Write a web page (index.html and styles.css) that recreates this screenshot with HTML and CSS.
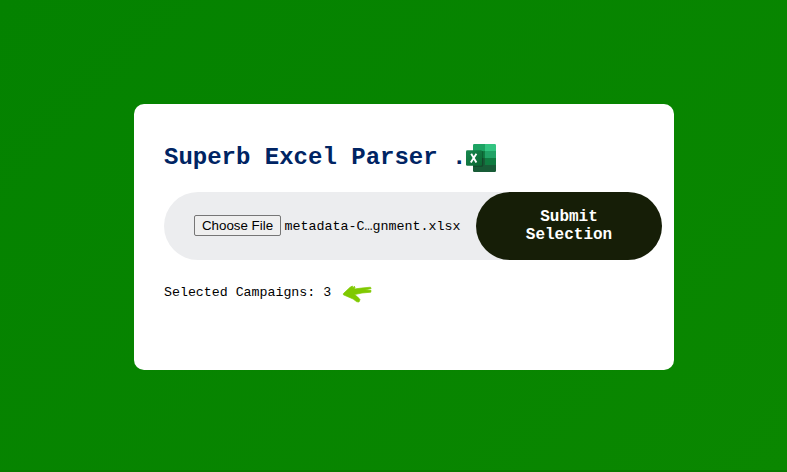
FILE: index.html
```html
<!DOCTYPE html>
<html lang="en">
<head>
<meta charset="utf-8">
<title>Superb Excel Parser</title>
<link rel="stylesheet" href="styles.css">
</head>
<body>
<main class="card">
  <h1 class="title"><span>Superb Excel Parser .</span><svg class="excel" viewBox="0 0 30 28" aria-hidden="true">
    <defs>
      <linearGradient id="tile" x1="0" y1="0" x2="1" y2="1"><stop offset="0" stop-color="#18884f"/><stop offset="1" stop-color="#0b6631"/></linearGradient>
      <clipPath id="sheet"><rect x="7" width="23" height="28" rx="1.3"/></clipPath>
    </defs>
    <g clip-path="url(#sheet)">
      <path fill="#1da363" d="M7 0h12v7H7z"/><path fill="#33c481" d="M19 0h11v7H19z"/>
      <path fill="#107c41" d="M7 7h12v7H7z"/><path fill="#21a366" d="M19 7h11v7H19z"/>
      <path fill="#185c37" d="M7 14h12v14H7z"/><path fill="#107c41" d="M19 14h11v7H19z"/>
      <path fill="#185c37" d="M19 21h11v7H19z"/>
      <rect x="5" y="7" width="12.2" height="15.8" rx="1.3" fill="#000" opacity=".22"/>
    </g>
    <rect y="6.2" width="16" height="15.6" rx="1.3" fill="url(#tile)"/>
    <path d="M5.2 9.8l5.2 8.6M10.4 9.8l-5.6 8.6" stroke="#fff" stroke-width="1.9" fill="none"/>
  </svg></h1>
  <form class="upload">
    <div class="field">
      <button type="button" class="choose">Choose File</button>
      <span class="filename">metadata-C…gnment.xlsx</span>
    </div>
    <button type="button" class="submit">Submit Selection</button>
  </form>
  <div class="status">
    <span>Selected Campaigns: 3</span>
    <svg class="arrow" viewBox="0 0 30 18" aria-hidden="true">
      <path d="M1.4 8.6L6 4.2Q8 2 10.4 1L10.6 3 12.3 1.2 13 2.2 12.2 4Q19 3 28.4 2.2L29.2 3.4 23 5 29 5.3 28.8 7.2 20 8 12.5 9.6Q15.5 11.5 18 14.6L17 17 14.8 16.8Q11.5 13.6 7 12.2L1.4 9.8z"/>
    </svg>
  </div>
</main>
</body>
</html>
```
FILE: styles.css
```css
* { box-sizing: border-box; }

body {
  margin: 0;
  height: 472px;
  padding: 104px 0 0 134px;
  background: linear-gradient(135deg, #048200, #0a8700);
  border-bottom: 2px solid #087b00;
  font-family: "Courier New", "Liberation Mono", monospace;
  overflow: hidden;
}

.card {
  width: 540px;
  height: 266px;
  padding: 40px 30px;
  border-radius: 10px;
  background: #fff;
}

.title {
  display: flex;
  align-items: center;
  height: 28px;
  margin: 0 0 20px;
  color: #002463;
  font-size: 24px;
  line-height: 28px;
  white-space: pre;
}

.excel {
  width: 30px;
  height: 28px;
  flex: none;
}

.upload {
  display: flex;
  width: 498px;
  height: 68px;
  border-radius: 34px;
  background: #ecedef;
}

.field {
  display: flex;
  align-items: center;
  flex: 1;
  gap: 3.5px;
  padding-left: 30px;
}

.choose {
  flex: none;
  width: 87px;
  height: 21px;
  margin-bottom: 1px;
  padding: 0;
  border: 1px solid #767676;
  border-radius: 2px;
  background: #efefef;
  color: #000;
  font: 13.333px/17px "Liberation Sans", Arial, sans-serif;
}

.filename {
  font-size: 13.333px;
  white-space: nowrap;
}

.submit {
  flex: none;
  width: 186px;
  height: 68px;
  padding: 0 40px;
  border: 0;
  border-radius: 34px;
  background: #161e07;
  color: #fff;
  font: bold 16px/18px "Courier New", "Liberation Mono", monospace;
}

.status {
  display: flex;
  align-items: flex-start;
  gap: 11px;
  height: 20px;
  margin-top: 25px;
  color: #000;
  font-size: 13.28px;
  line-height: 16px;
}

.arrow {
  width: 30px;
  height: 18px;
  fill: #7fc900;
  stroke: #7fc900;
  stroke-width: 0.7;
  stroke-linejoin: round;
}
```
